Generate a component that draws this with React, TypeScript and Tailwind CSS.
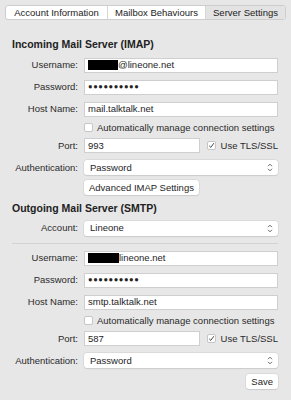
import React from "react";

const font = { fontFamily: '"Liberation Sans", Arial, sans-serif' };

function Label({ children }: { children: React.ReactNode }) {
  return (
    <div className="w-[66px] shrink-0 whitespace-nowrap text-right text-[9.5px] leading-none text-[#2a2a2a]">
      {children}
    </div>
  );
}

function Field({ children, className = "" }: { children?: React.ReactNode; className?: string }) {
  return (
    <div
      className={
        "flex h-[15px] items-center whitespace-nowrap border border-[#cfcfcf] bg-white pl-[3px] text-[9.5px] leading-none text-[#1e1e1e] " +
        className
      }
    >
      {children}
    </div>
  );
}

function Row({ label, children, className = "" }: { label?: string; children: React.ReactNode; className?: string }) {
  return (
    <div className={"flex items-center gap-[6px] " + className}>
      <Label>{label}</Label>
      <div className="flex min-w-0 flex-1 items-center">{children}</div>
    </div>
  );
}

function Chevrons() {
  return (
    <svg width="6" height="9" viewBox="0 0 6 9" className="text-[#555]">
      <path d="M1 3.2 L3 1.2 L5 3.2 M1 5.8 L3 7.8 L5 5.8" fill="none" stroke="currentColor" strokeWidth="0.9" />
    </svg>
  );
}

function Select({ value }: { value: string }) {
  return (
    <div className="flex h-[15px] flex-1 items-center justify-between rounded-[3px] bg-white pl-[6px] pr-[5px] text-[9.5px] leading-none text-[#1e1e1e] shadow-[0_0_0_0.5px_#cdcdcd,0_1px_1px_rgba(0,0,0,0.12)]">
      <span>{value}</span>
      <Chevrons />
    </div>
  );
}

function Check({ checked }: { checked?: boolean }) {
  return (
    <div className="flex h-[9px] w-[9px] shrink-0 items-center justify-center rounded-[2px] border border-[#c6c6c6] bg-white">
      {checked && (
        <svg width="7" height="7" viewBox="0 0 7 7">
          <path d="M1.2 3.8 L2.8 5.4 L5.8 1.2" fill="none" stroke="#333" strokeWidth="0.9" />
        </svg>
      )}
    </div>
  );
}

function Dots() {
  return <span className="text-[7.5px] tracking-[0.6px] text-[#222]">●●●●●●●●●●</span>;
}

function Server({
  user,
  host,
  port,
  offset,
}: {
  user: React.ReactNode;
  host: string;
  port: string;
  offset: string;
}) {
  return (
    <div className={"flex flex-col " + offset}>
      <Row label="Username:">
        <Field className="flex-1">{user}</Field>
      </Row>
      <Row label="Password:" className="mt-[7px]">
        <Field className="flex-1">
          <Dots />
        </Field>
      </Row>
      <Row label="Host Name:" className="mt-[7px]">
        <Field className="flex-1">{host}</Field>
      </Row>
      <Row className="mt-[6px]">
        <div className="flex items-center gap-[4px] whitespace-nowrap text-[9.5px] leading-none text-[#2a2a2a]">
          <Check />
          <span>Automatically manage connection settings</span>
        </div>
      </Row>
      <Row label="Port:" className="mt-[6px]">
        <Field className="w-[119px]">{port}</Field>
        <div className="ml-[7px] flex items-center gap-[5px] whitespace-nowrap text-[9.5px] leading-none text-[#2a2a2a]">
          <Check checked />
          <span>Use TLS/SSL</span>
        </div>
      </Row>
      <Row label="Authentication:" className="mt-[7px]">
        <Select value="Password" />
      </Row>
    </div>
  );
}

const btn =
  "flex h-[15px] items-center whitespace-nowrap rounded-[3px] bg-white px-[5px] text-[9.5px] leading-none text-[#1e1e1e] shadow-[0_0_0_0.5px_#cdcdcd,0_1px_1px_rgba(0,0,0,0.12)]";

export default function App() {
  return (
    <div style={font} className="h-[400px] w-[291px] overflow-hidden bg-[#e7e7e7] pl-[12px] pr-[13px]">
      <div className="-ml-[7px] -mr-[8px] mt-[5px] flex h-[15px] overflow-hidden whitespace-nowrap rounded-[3px] border border-[#cdcdcd] bg-white text-[9.5px] leading-none text-[#222]">
        <div className="flex w-[102px] items-center justify-center border-r border-[#d6d6d6]">Account Information</div>
        <div className="flex w-[98px] items-center justify-center border-r border-[#d6d6d6]">Mailbox Behaviours</div>
        <div className="flex flex-1 items-center justify-center bg-[#e3e3e3]">Server Settings</div>
      </div>

      <div className="mt-[19px] text-[10.5px] font-bold leading-none text-[#222]">Incoming Mail Server (IMAP)</div>

      <Server
        offset="mt-[8px]"
        user={
          <>
            <span className="inline-block h-[10px] w-[30px] bg-black" />
            <span>@lineone.net</span>
          </>
        }
        host="mail.talktalk.net"
        port="993"
      />

      <Row className="mt-[5px]">
        <div className={btn}>Advanced IMAP Settings</div>
      </Row>

      <div className="mt-[8px] text-[10.5px] font-bold leading-none text-[#222]">Outgoing Mail Server (SMTP)</div>

      <Row label="Account:" className="mt-[7px]">
        <Select value="Lineone" />
      </Row>

      <div className="mt-[7px] h-px bg-[#d2d2d2]" />

      <Server
        offset="mt-[7px]"
        user={
          <>
            <span className="inline-block h-[10px] w-[31px] bg-black" />
            <span>lineone.net</span>
          </>
        }
        host="smtp.talktalk.net"
        port="587"
      />

      <div className="mt-[6px] flex justify-end">
        <div className={btn}>Save</div>
      </div>
    </div>
  );
}
